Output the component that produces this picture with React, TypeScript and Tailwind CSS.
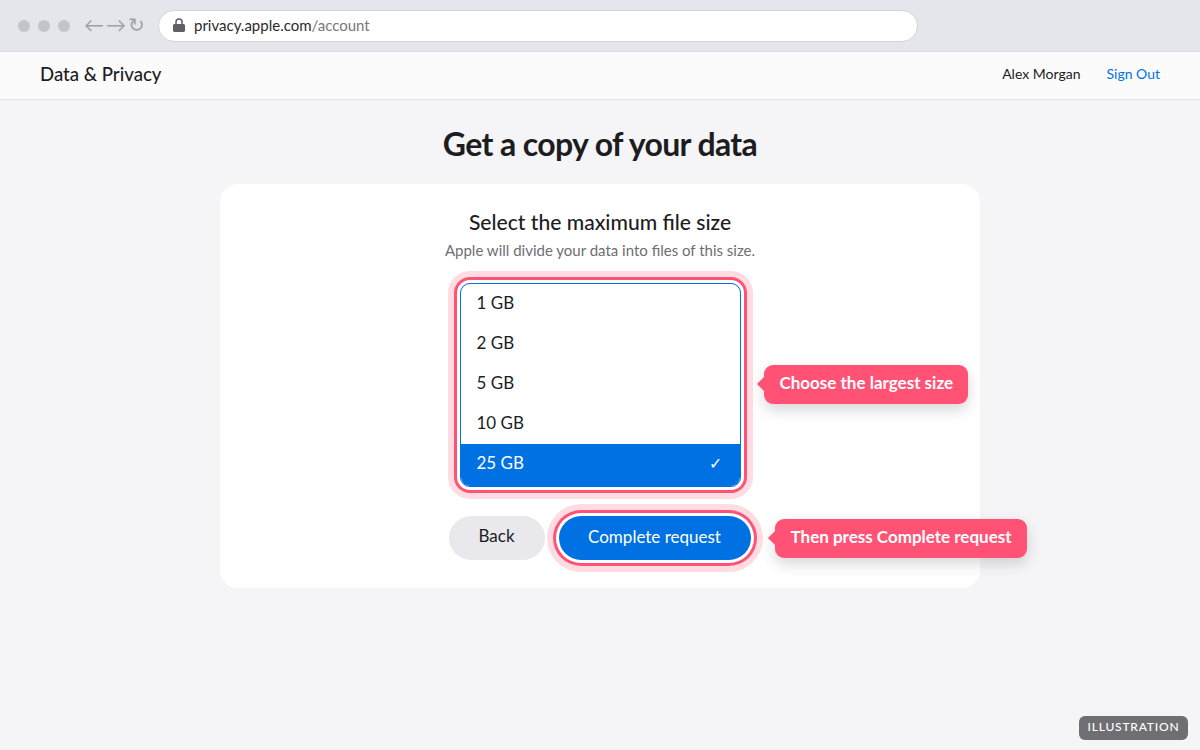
import React from "react";

const sizes = ["1 GB", "2 GB", "5 GB", "10 GB"];

function Callout({ text, className }: { text: string; className: string }) {
  return (
    <div
      className={`absolute flex h-[39px] items-center rounded-[9px] bg-[#ff5274] pb-[3px] pl-[15.500px] pr-[15px] text-[17px] font-bold text-white shadow-[0_6px_14px_rgba(60,60,80,0.2)] ${className}`}
    >
      <span className="absolute left-[-5px] top-[14px] size-[10px] rotate-45 bg-[#ff5274]" />
      <span className="relative whitespace-nowrap">{text}</span>
    </div>
  );
}

export default function App() {
  return (
    <div className="relative flex h-[750px] w-[1200px] flex-col overflow-hidden bg-[#f5f5f7] font-['Lato',sans-serif] text-[#1d1d1f]">
      {/* browser chrome */}
      <div className="flex h-[52px] shrink-0 items-center border-b border-[#dcdde2] bg-[#e5e6eb] pl-[18px]">
        <div className="flex gap-2">
          <span className="size-3 rounded-full bg-[#c4c4c6]" />
          <span className="size-3 rounded-full bg-[#c4c4c6]" />
          <span className="size-3 rounded-full bg-[#c4c4c6]" />
        </div>
        <div className="ml-[14px] flex w-[61px] justify-between pb-[3px] text-[20px] leading-6 text-[#a0a0a5]">
          <span>←</span>
          <span>→</span>
          <span>↻</span>
        </div>
        <div className="ml-[13px] flex h-8 w-[760px] items-center rounded-full border border-[#d3d4d9] bg-white pb-[1px] pl-[14px] text-[15px]">
          <svg className="h-[14px] w-3" viewBox="0 0 12 14" fill="#5f5f66">
            <path d="M1.5 6h9A1.5 1.5 0 0 1 12 7.500v5a1.500 1.500 0 0 1-1.500 1.500h-9A1.500 1.500 0 0 1 0 12.500v-5A1.500 1.500 0 0 1 1.500 6Z" />
            <path d="M3 6.500V4a3 3 0 0 1 6 0v2.500" fill="none" stroke="#5f5f66" strokeWidth="1.500" />
          </svg>
          <span className="ml-[9px] text-[#2b2b2e]">privacy.apple.com</span>
          <span className="text-[#77777c]">/account</span>
        </div>
      </div>

      {/* site header */}
      <div className="flex h-12 shrink-0 items-center justify-between border-b border-[#e2e2e5] bg-[#fbfbfb] px-10 pb-[2px]">
        <span className="text-[18.600px] font-medium">Data &amp; Privacy</span>
        <div className="mb-[1px] flex gap-[26px] text-sm">
          <span>Alex Morgan</span>
          <span className="text-[#0071e3]">Sign Out</span>
        </div>
      </div>

      <h1 className="mt-[22px] text-center text-[32px] font-bold leading-[44px] tracking-[-0.620px] text-[#1d1d1f]">
        Get a copy of your data
      </h1>

      {/* card */}
      <div className="relative mx-auto mt-[18px] flex h-[404px] w-[760px] flex-col items-center rounded-[18px] bg-white pt-[24px]">
        <h2 className="text-[21.100px] font-medium leading-7">Select the maximum file size</h2>
        <p className="mt-[3px] text-[15px] leading-[22px] text-[#6e6e73]">
          Apple will divide your data into files of this size.
        </p>

        <div className="mt-[22px] w-[281px] rounded-[10px] shadow-[0_0_0_3px_#ffffff,0_0_0_6px_#ff5274,0_0_0_12px_#ffdbe2]">
          <div className="overflow-hidden rounded-[10px] border border-[#0071e3] text-[17px]">
            {sizes.map((size) => (
              <div key={size} className="flex h-10 items-center pb-[2px] pl-4">
                {size}
              </div>
            ))}
            <div className="flex h-[42px] items-center justify-between bg-[#0071e3] pb-[4px] pl-4 pr-[18px] text-white">
              <span>25 GB</span>
              <span className="text-base">✓</span>
            </div>
          </div>
        </div>

        <div className="mt-[29px] flex gap-[14px] pr-[1px]">
          <button className="h-11 w-[96px] rounded-full bg-[#e8e8ed] pb-[4px] text-[17px]">Back</button>
          <button className="h-11 w-[192px] rounded-full bg-[#0071e3] pb-[3px] text-[17px] text-white shadow-[0_0_0_3px_#ffffff,0_0_0_6px_#ff5274,0_0_0_12px_#ffdbe2]">
            Complete request
          </button>
        </div>

        <Callout text="Choose the largest size" className="left-[544px] top-[181px]" />
        <Callout text="Then press Complete request" className="left-[555px] top-[335px]" />
      </div>

      <div className="absolute bottom-[10px] right-3 flex h-6 w-[109px] items-center justify-center rounded-md bg-[#6e6e73] pb-[2px] text-xs font-medium tracking-[0.800px] text-white">
        ILLUSTRATION
      </div>
    </div>
  );
}
